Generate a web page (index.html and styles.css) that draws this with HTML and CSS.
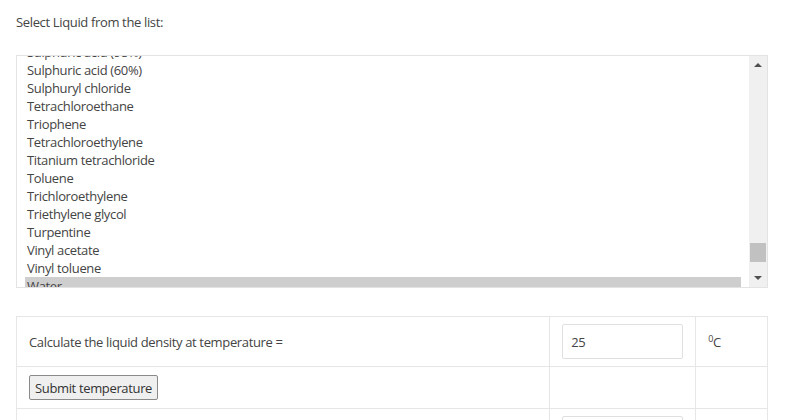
FILE: index.html
```html
<!DOCTYPE html>
<html lang="en">

<head>
    <meta charset="UTF-8">
    <title>Liquid density</title>
    <link rel="stylesheet" href="styles.css">
</head>

<body>
    <p class="prompt">Select Liquid from the list:</p>

    <!-- Liquid list box -->
    <div class="listbox">
        <ul class="options">
            <li>Sulphuric acid (98%)</li>
            <li>Sulphuric acid (60%)</li>
            <li>Sulphuryl chloride</li>
            <li>Tetrachloroethane</li>
            <li>Triophene</li>
            <li>Tetrachloroethylene</li>
            <li>Titanium tetrachloride</li>
            <li>Toluene</li>
            <li>Trichloroethylene</li>
            <li>Triethylene glycol</li>
            <li>Turpentine</li>
            <li>Vinyl acetate</li>
            <li>Vinyl toluene</li>
            <li class="selected">Water</li>
        </ul>
        <div class="scrollbar">
            <span class="arrow up"></span>
            <div class="track">
                <div class="thumb"></div>
            </div>
            <span class="arrow down"></span>
        </div>
    </div>

    <!-- Temperature form -->
    <table class="calc">
        <tr class="row-input">
            <td class="label">Calculate the liquid density at temperature =</td>
            <td class="field"><input type="text" value="25"></td>
            <td class="unit"><sup>0</sup>C</td>
        </tr>
        <tr class="row-button">
            <td><button type="button">Submit temperature</button></td>
            <td></td>
            <td></td>
        </tr>
        <tr class="row-input">
            <td></td>
            <td class="field"><input type="text" value=""></td>
            <td></td>
        </tr>
    </table>
</body>

</html>
```

FILE: styles.css
```css
* {
    box-sizing: border-box;
    margin: 0;
    padding: 0;
}

body {
    font-family: "Open Sans", Arial, sans-serif;
    font-size: 13px;
    letter-spacing: -0.35px;
    color: #444;
    background: white;
    padding: 0 16px;
    overflow: hidden;
}

.prompt {
    line-height: 20px;
    margin-top: 12px;
    margin-bottom: 23px;
}
/* List box */

.listbox {
    display: flex;
    width: 752px;
    height: 233px;
    border: 1px solid #e3e3e3;
    overflow: hidden;
}

.options {
    flex: 1;
    list-style: none;
    padding: 0 8px;
    margin-top: -13px;
}

.options li {
    height: 18px;
    line-height: 18px;
    padding: 0 2px;
    color: #444;
    white-space: nowrap;
}

.options li.selected {
    background: #cecece;
}

.scrollbar {
    width: 18px;
    background: #f0f0f0;
    display: flex;
    flex-direction: column;
}

.arrow {
    height: 18px;
    display: flex;
    align-items: center;
    justify-content: center;
}

.arrow::before {
    content: "";
    border-left: 4px solid transparent;
    border-right: 4px solid transparent;
}

.arrow.up::before {
    border-bottom: 4px solid #505050;
}

.arrow.down::before {
    border-top: 4px solid #505050;
}

.track {
    flex: 1;
    display: flex;
    flex-direction: column;
    justify-content: flex-end;
    padding: 0 1px 7px;
}

.thumb {
    height: 19px;
    background: #c1c1c1;
}
/* Calculation table */

.calc {
    width: 752px;
    margin-top: 28px;
    border-collapse: collapse;
}

.calc td {
    border: 1px solid #e6e6e6;
    padding: 7px 12px;
    vertical-align: middle;
}

.calc .label {
    width: 535px;
}

.calc .field {
    width: 145px;
}

.calc .unit {
    width: 72px;
}

.calc sup {
    font-size: 9px;
}

.calc input {
    width: 121px;
    height: 35px;
    border: 1px solid #e0e0e0;
    border-radius: 2px;
    padding: 0 8px;
    font-family: "Open Sans", Arial, sans-serif;
    font-size: 13px;
    letter-spacing: -0.35px;
    color: #444;
    display: block;
}

.row-button td {
    height: 42px;
}

button {
    font-family: "Open Sans", Arial, sans-serif;
    font-size: 13px;
    letter-spacing: -0.35px;
    color: #333;
    background: #efefef;
    border: 1px solid #8a8a8a;
    border-radius: 2px;
    height: 25px;
    padding: 0 5px;
    display: block;
}
```
